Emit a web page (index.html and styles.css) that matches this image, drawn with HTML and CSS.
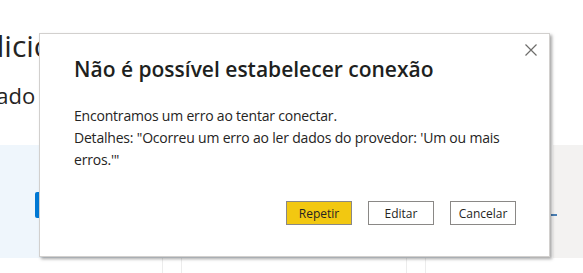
FILE: index.html
```html
<!DOCTYPE html>
<html lang="pt">
<head>
  <meta charset="UTF-8">
  <meta name="viewport" content="width=device-width, initial-scale=1.0">
  <title>Adicionar dados</title>
  <link rel="stylesheet" href="styles.css">
</head>
<body>
  <div class="page">
    <div class="page-title">Adicionar dados ao seu relatório</div>
    <div class="page-sub">Depois de carregado no Power BI, seus dados aparecerão aqui.</div>

    <div class="cards">
      <div class="card card-blue">
        <div class="card-tab"></div>
      </div>
      <div class="card card-gray">
        <div class="card-dash"></div>
      </div>
    </div>

    <div class="tiles">
      <div class="tile"></div>
      <div class="tile"></div>
      <div class="tile"></div>
    </div>
  </div>

  <div class="dialog" role="dialog">
    <button class="close" aria-label="Fechar">
      <svg width="12" height="12" viewBox="0 0 12 12">
        <path d="M0.5 0.5 L11.5 11.5 M11.5 0.5 L0.5 11.5" stroke="#6e6d6b" stroke-width="1.2" fill="none"/>
      </svg>
    </button>
    <div class="dialog-title">Não é possível estabelecer conexão</div>
    <div class="dialog-body">
      <p>Encontramos um erro ao tentar conectar.</p>
      <p>Detalhes: "Ocorreu um erro ao ler dados do provedor: 'Um ou mais erros.'"</p>
    </div>
    <div class="dialog-actions">
      <button class="btn btn-primary">Repetir</button>
      <button class="btn">Editar</button>
      <button class="btn">Cancelar</button>
    </div>
  </div>
</body>
</html>
```

FILE: styles.css
```css
body {
  margin: 0;
  width: 583px;
  height: 273px;
  overflow: hidden;
  background: #fff;
  font-family: "Open Sans", "Noto Sans", sans-serif;
  color: #252423;
  position: relative;
}
.page {
  padding-top: 28px;
}
.page-title {
  font-size: 30px;
  line-height: 36px;
  white-space: nowrap;
  margin-left: -33px;
  color: #252423;
}
.page-sub {
  font-size: 22px;
  line-height: 30px;
  white-space: nowrap;
  margin-left: -177px;
  margin-top: 16px;
}
.cards {
  display: flex;
  gap: 23px;
  margin-top: 35px;
  height: 113px;
}
.card {
  height: 100%;
  position: relative;
}
.card-blue {
  width: 530px;
  background: #eff6fc;
}
.card-tab {
  position: absolute;
  left: 35px;
  top: 47px;
  width: 5px;
  height: 26px;
  border-radius: 2px 0 0 2px;
  background: #0078d4;
}
.card-gray {
  flex: 1;
  background: #f3f2f1;
}
.card-dash {
  position: absolute;
  left: -2px;
  top: 69px;
  width: 6px;
  height: 2px;
  background: #4a7fb5;
}
.tiles {
  display: flex;
  gap: 18px;
  margin-left: -63px;
  overflow: hidden;
}
.tile {
  flex-shrink: 0;
  width: 224px;
  height: 15px;
  border-left: 1px solid #ececec;
  border-right: 1px solid #ececec;
}

.dialog {
  position: absolute;
  left: 39px;
  top: 33px;
  box-sizing: border-box;
  width: 511px;
  height: 224px;
  padding: 0 33px 0 34px;
  background: #fff;
  border: 1px solid #d2d0ce;
  box-shadow: 2px 2px 3px rgba(0, 0, 0, 0.35);
  display: flex;
  flex-direction: column;
}
.close {
  position: absolute;
  top: 10px;
  right: 12px;
  padding: 0;
  border: none;
  background: none;
  line-height: 0;
}
.dialog-title {
  margin-top: 20px;
  font-size: 21px;
  line-height: 30px;
  font-weight: 600;
  color: #201f1e;
}
.dialog-body {
  margin-top: 21px;
  font-size: 14px;
  line-height: 22px;
  letter-spacing: -0.2px;
}
.dialog-body p {
  margin: 0;
}
.dialog-actions {
  display: flex;
  justify-content: flex-end;
  gap: 16px;
  margin-top: auto;
  margin-bottom: 31px;
}
.btn {
  width: 66px;
  height: 24px;
  padding: 0;
  border: 1px solid #8a8886;
  background: #fff;
  font-family: inherit;
  font-size: 12px;
  color: #252423;
}
.btn-primary {
  background: #f2c811;
}
```
